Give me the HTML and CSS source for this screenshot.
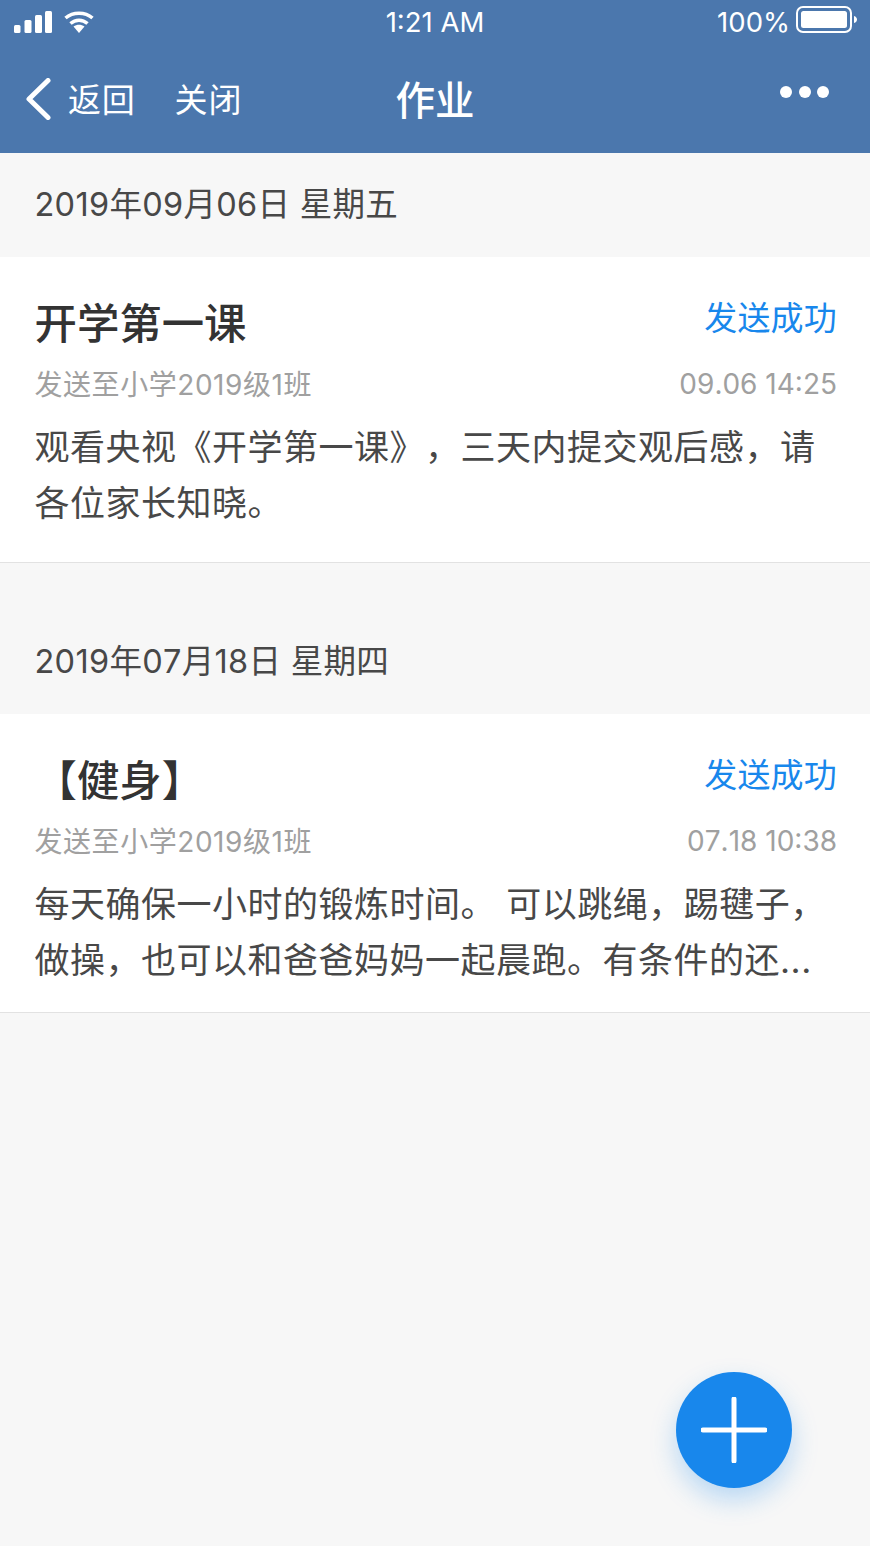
FILE: index.html
```html
<!DOCTYPE html>
<html lang="zh-CN">
<head>
<meta charset="utf-8">
<title>作业</title>
<link rel="stylesheet" href="styles.css">
</head>
<body>
<div class="screen">
  <header class="top">
    <div class="status">
      <div class="status-left">
        <svg class="signal" width="38" height="22" viewBox="0 0 38 22"><rect x="0" y="14" width="6.500" height="8" rx="1.500"/><rect x="10.500" y="9" width="7" height="13" rx="1.500"/><rect x="21" y="4" width="7" height="18" rx="1.500"/><rect x="31" y="0" width="7" height="22" rx="1.500"/></svg>
        <svg class="wifi" width="30" height="22" viewBox="0 0 30 22"><path d="M1.500 7C9 .5 21 .5 28.500 7" class="arc"/><path d="M6.500 12.500C11.500 8 18.500 8 23.500 12.500" class="arc"/><path d="M9.500 15.500C13 13 17 13 20.500 15.500L15 22Z"/></svg>
      </div>
      <div class="clock">1:21 AM</div>
      <div class="status-right">
        <span>100%</span>
        <svg class="battery" width="62" height="28" viewBox="0 0 62 28"><rect x="1" y="1" width="54" height="25" rx="6" class="batt-frame"/><rect x="5" y="5" width="46" height="17" rx="2.500"/><path d="M58 10c2 .5 3 2 3 3.500s-1 3-3 3.500Z"/></svg>
      </div>
    </div>
    <nav class="nav">
      <div class="nav-left">
        <svg class="back" width="26" height="42" viewBox="0 0 26 42"><path d="M23 2.500L4 21l19 18.500"/></svg>
        <span class="nav-link">返回</span>
        <span class="nav-link close">关闭</span>
      </div>
      <h1 class="nav-title">作业</h1>
      <div class="more"><i></i><i></i><i></i></div>
    </nav>
  </header>

  <section class="group">
    <div class="date">2019年09月06日 星期五</div>
    <article class="card first">
      <div class="row">
        <h2 class="title">开学第一课</h2>
        <span class="state">发送成功</span>
      </div>
      <div class="row meta">
        <span class="target">发送至小学2019级1班</span>
        <span class="time">09.06 14:25</span>
      </div>
      <p class="body">观看央视《开学第一课》，三天内提交观后感，请各位家长知晓。</p>
    </article>
  </section>

  <section class="group second">
    <div class="date">2019年07月18日 星期四</div>
    <article class="card">
      <div class="row">
        <h2 class="title">【健身】</h2>
        <span class="state">发送成功</span>
      </div>
      <div class="row meta">
        <span class="target">发送至小学2019级1班</span>
        <span class="time">07.18 10:38</span>
      </div>
      <p class="body">每天确保一小时的锻炼时间。 可以跳绳，踢毽子，做操，也可以和爸爸妈妈一起晨跑。有条件的还...</p>
    </article>
  </section>

  <button class="fab" aria-label="添加">
    <svg width="66" height="66" viewBox="0 0 66 66"><path d="M33 2v62M2 33h62"/></svg>
  </button>
</div>
</body>
</html>
```
FILE: styles.css
```css
* { box-sizing: border-box; }
html, body { margin: 0; padding: 0; }
body {
  width: 870px;
  height: 1546px;
  overflow: hidden;
  background: #f7f7f7;
  font-family: "Inter", "Noto Sans CJK SC", sans-serif;
  text-spacing-trim: space-all;
  font-kerning: none;
}
.screen { position: relative; width: 870px; height: 1546px; background: #f7f7f7; }

.top { height: 153px; background: #4b77ad; color: #fff; }
.status { height: 44px; display: flex; align-items: center; justify-content: space-between; position: relative; padding: 0 12px 0 14px; }
.status-left { display: flex; align-items: center; gap: 12px; }
.signal, .wifi, .battery { fill: #fff; display: block; }
.arc { fill: none; stroke: #fff; stroke-width: 3.500; }
.clock { position: absolute; left: 0; right: 0; text-align: center; font-size: 27.500px; line-height: 44px; }
.status-right { display: flex; align-items: center; gap: 6px; font-size: 27.500px; }
.battery { margin-top: -4px; }
.batt-frame { fill: none; stroke: #fff; stroke-width: 2; }

.nav { height: 109px; display: flex; align-items: center; position: relative; padding: 0 41px 0 25px; justify-content: space-between; }
.nav-left { display: flex; align-items: center; }
.back { fill: none; stroke: #fff; stroke-width: 5; stroke-linecap: round; stroke-linejoin: round; margin-right: 17px; }
.nav-link { font-size: 33px; line-height: 44px; letter-spacing: .8px; margin-top: 2px; }
.close { margin-left: 39px; }
.nav-title { position: absolute; left: 0; right: 0; top: 30px; margin: 0; text-align: center; font-size: 39.500px; line-height: 54px; font-weight: 500; }
.more { display: flex; gap: 6.500px; margin-top: -14px; }
.more i { width: 12px; height: 12px; border-radius: 50%; background: #fff; display: block; }

.date { height: 104px; padding: 0 34.500px 7px; display: flex; align-items: center; font-size: 32.500px; letter-spacing: .3px; color: #484848; white-space: pre; }
.second { margin-top: 47px; }
.card { background: #fff; padding: 36px 33px 24px 34.500px; border-bottom: 1px solid #e2e2e2; }
.first { padding-bottom: 31px; }
.row { display: flex; justify-content: space-between; align-items: flex-start; }
.title { margin: 0; font-size: 42.400px; line-height: 62px; font-weight: 500; color: #333; }
.state { font-size: 33px; letter-spacing: .2px; line-height: 50px; color: #1887ec; }
.meta { margin-top: 13px; font-size: 28px; line-height: 34px; color: #a0a0a0; }
.target { letter-spacing: .55px; }
.time { margin-top: -1px; }
.body { margin: 17px 0 0; font-size: 35px; letter-spacing: .5px; line-height: 56px; color: #484848; }

.fab { position: absolute; left: 676px; top: 1372px; width: 116px; height: 116px; border: 0; padding: 0; border-radius: 50%; background: #1887ec; box-shadow: 0 12px 26px rgba(24, 135, 236, .28); display: flex; align-items: center; justify-content: center; }
.fab svg { fill: none; stroke: #fff; stroke-width: 5; stroke-linecap: round; display: block; }
```
